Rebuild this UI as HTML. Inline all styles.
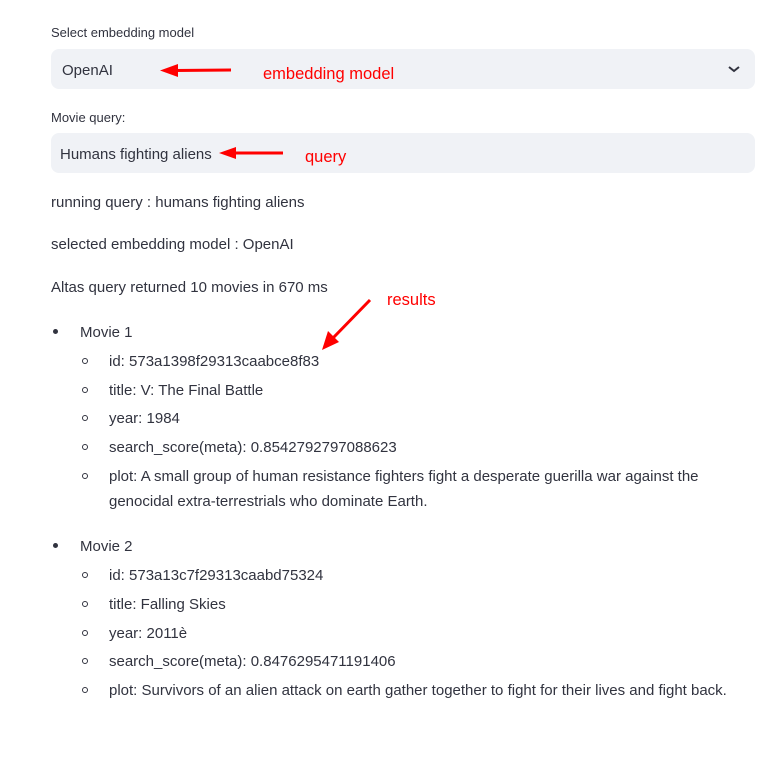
<!DOCTYPE html>
<html><head><style>
html,body{margin:0;padding:0;background:#fff;width:760px;height:761px;overflow:hidden;position:relative}
body{font-family:"Liberation Sans",sans-serif;color:#31333f}
.a{position:absolute;white-space:nowrap;line-height:1}
.t{font-size:15px;letter-spacing:0}
.s{font-size:13px;letter-spacing:0}
.box{position:absolute;left:51px;width:704px;height:40px;background:#f0f2f6;border-radius:8px}
.red{color:#ff0000;font-size:16.5px}
.dot{position:absolute;width:5px;height:5px;border-radius:50%;background:#31333f}
.circ{position:absolute;width:4px;height:4px;border-radius:50%;border:1px solid #31333f}
</style></head><body>
<div class="a s" style="left:51px;top:26px">Select embedding model</div>
<div class="box" style="top:49px"></div>
<div class="a t" style="left:62px;top:63px">OpenAI</div>
<svg style="position:absolute;left:727px;top:64px" width="14" height="10"><path d="M2 3 L7 7 L12 3" stroke="#31333f" stroke-width="2" fill="none"/></svg>
<div class="a s" style="left:51px;top:111px">Movie query:</div>
<div class="box" style="top:133px"></div>
<div class="a t" style="left:60px;top:147px">Humans fighting aliens</div>
<div class="a red" style="left:263px;top:66px">embedding model</div>
<div class="a red" style="left:305px;top:149px">query</div>
<div class="a red" style="left:387px;top:292px">results</div>
<svg style="position:absolute;left:0;top:0" width="760" height="761">
<g stroke="#ff0000" stroke-width="3" fill="#ff0000">
<line x1="231" y1="70" x2="175" y2="70.5"/><path d="M160 70.5 L178 64 L178 77 Z" stroke="none"/>
<line x1="283" y1="153" x2="233" y2="153"/><path d="M219 153 L236 147 L236 159 Z" stroke="none"/>
<line x1="370" y1="300" x2="333" y2="338"/><path d="M322 350 L328 331 L339 342 Z" stroke="none"/>
</g></svg>
<div class="a t" style="left:51px;top:195px">running query : humans fighting aliens</div>
<div class="a t" style="left:51px;top:237px">selected embedding model : OpenAI</div>
<div class="a t" style="left:51px;top:280px">Altas query returned 10 movies in 670 ms</div>
<div class="dot" style="left:53px;top:329px"></div>
<div class="a t" style="left:80px;top:325px">Movie 1</div>
<div class="circ" style="left:82px;top:358px"></div><div class="a t" style="left:109px;top:354px">id: 573a1398f29313caabce8f83</div>
<div class="circ" style="left:82px;top:387px"></div><div class="a t" style="left:109px;top:383px">title: V: The Final Battle</div>
<div class="circ" style="left:82px;top:415px"></div><div class="a t" style="left:109px;top:411px">year: 1984</div>
<div class="circ" style="left:82px;top:444px"></div><div class="a t" style="left:109px;top:440px">search_score(meta): 0.8542792797088623</div>
<div class="circ" style="left:82px;top:473px"></div><div class="a t" style="left:109px;top:469px">plot: A small group of human resistance fighters fight a desperate guerilla war against the</div>
<div class="a t" style="left:109px;top:494px">genocidal extra-terrestrials who dominate Earth.</div>
<div class="dot" style="left:53px;top:543px"></div>
<div class="a t" style="left:80px;top:539px">Movie 2</div>
<div class="circ" style="left:82px;top:572px"></div><div class="a t" style="left:109px;top:568px">id: 573a13c7f29313caabd75324</div>
<div class="circ" style="left:82px;top:601px"></div><div class="a t" style="left:109px;top:597px">title: Falling Skies</div>
<div class="circ" style="left:82px;top:630px"></div><div class="a t" style="left:109px;top:626px">year: 2011è</div>
<div class="circ" style="left:82px;top:658px"></div><div class="a t" style="left:109px;top:654px">search_score(meta): 0.8476295471191406</div>
<div class="circ" style="left:82px;top:687px"></div><div class="a t" style="left:109px;top:683px">plot: Survivors of an alien attack on earth gather together to fight for their lives and fight back.</div>
</body></html>
